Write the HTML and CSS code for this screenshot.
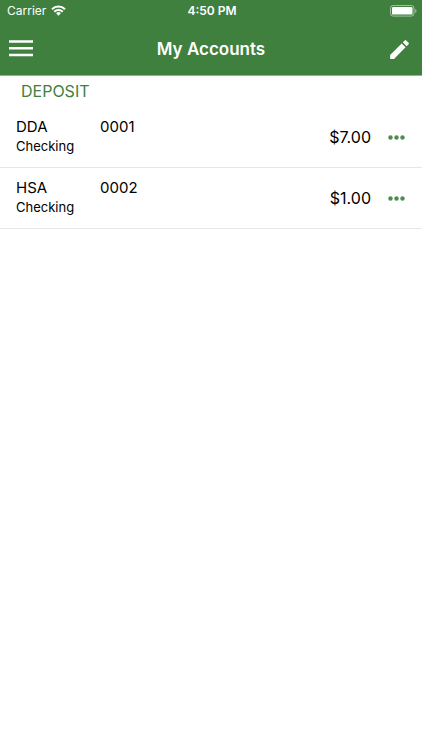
FILE: index.html
```html
<!DOCTYPE html>
<html lang="en">
<head>
<meta charset="utf-8">
<meta name="viewport" content="width=device-width, initial-scale=1">
<title>My Accounts</title>
<link rel="stylesheet" href="styles.css">
</head>
<body>
<header class="top">
  <div class="status">
    <div class="carrier">Carrier
      <svg width="15" height="11" viewBox="0 0 15 11" aria-hidden="true"><g fill="none" stroke="#fff" stroke-width="2.100"><path d="M1 4.200a9.200 9.200 0 0 1 13 0"/><path d="M3.300 6.700a5.900 5.900 0 0 1 8.400 0"/></g><path fill="#fff" d="M5.100 8.300a3.400 3.400 0 0 1 4.800 0L7.500 10.700z"/></svg>
    </div>
    <div class="time">4:50 PM</div>
    <div class="battery">
      <svg width="27" height="12" viewBox="0 0 27 12" aria-hidden="true"><rect x=".5" y=".5" width="23.500" height="10.600" rx="2.600" fill="none" stroke="#fff" stroke-opacity=".5"/><rect x="2" y="2" width="20.500" height="7.600" rx="1.200" fill="#fff"/><path d="M25.200 4v4q1.300-.6 1.300-2t-1.300-2z" fill="#fff" fill-opacity=".5"/></svg>
    </div>
  </div>
  <nav class="bar">
    <button class="icon-button" aria-label="Menu"><svg width="24" height="18" viewBox="0 0 24 18"><path d="M0 1.500h24M0 8.200h24M0 14.900h24" stroke="#fff" stroke-width="2.500"/></svg></button>
    <h1>My Accounts</h1>
    <button class="icon-button edit" aria-label="Edit"><svg width="25" height="25" viewBox="0 0 24 24"><path fill="#fff" d="M3 17.250V21h3.750L17.810 9.940l-3.750-3.750L3 17.250zM20.710 7.040a1 1 0 0 0 0-1.410l-2.340-2.340a1 1 0 0 0-1.410 0l-1.830 1.830 3.750 3.750 1.830-1.830z"/></svg></button>
  </nav>
</header>
<main>
  <h2>DEPOSIT</h2>
  <ul class="accounts">
    <li>
      <div class="info"><div class="name"><span class="code">DDA</span><span>0001</span></div><div class="kind">Checking</div></div>
      <div class="amount">$7.00</div>
      <button class="more" aria-label="More options for DDA"><svg width="17" height="5" viewBox="0 0 17 5"><g fill="#4f8a4f"><circle cx="2.500" cy="2.500" r="2.200"/><circle cx="8.500" cy="2.500" r="2.200"/><circle cx="14.500" cy="2.500" r="2.200"/></g></svg></button>
    </li>
    <li>
      <div class="info"><div class="name"><span class="code">HSA</span><span>0002</span></div><div class="kind">Checking</div></div>
      <div class="amount">$1.00</div>
      <button class="more" aria-label="More options for HSA"><svg width="17" height="5" viewBox="0 0 17 5"><g fill="#4f8a4f"><circle cx="2.500" cy="2.500" r="2.200"/><circle cx="8.500" cy="2.500" r="2.200"/><circle cx="14.500" cy="2.500" r="2.200"/></g></svg></button>
    </li>
  </ul>
</main>
</body>
</html>
```
FILE: styles.css
```css
* { box-sizing: border-box; margin: 0; padding: 0; }
body { background: #fff; color: #000; font-family: Inter, "Liberation Sans", sans-serif; }
svg { display: block; }
button { background: none; border: 0; cursor: pointer; }
.top { background: #3f803f; color: #fff; border-bottom: 1px solid #93b393; }
.status { display: grid; grid-template-columns: 1fr auto 1fr; align-items: center; height: 21px; padding: 0 5px 0 7px; font-size: 12px; }
.carrier { display: flex; align-items: center; gap: 5px; }
.time { font-weight: 600; }
.battery { justify-self: end; }
.bar { display: grid; grid-template-columns: 48px 1fr 48px; align-items: center; height: 54px; padding-top: 2px; }
.icon-button { padding-left: 9px; height: 48px; }
.edit { padding: 0 10px 0 0; justify-self: end; }
h1 { font-size: 17px; font-weight: 600; text-align: center; }
h2 { padding: 5px 21px 6px; color: #3f803f; font-size: 16px; font-weight: 400; line-height: 20px; }
.accounts { list-style: none; }
li { display: flex; align-items: center; height: 61px; padding: 0 17px 0 16px; border-bottom: 1px solid #e6e6e6; }
.info { flex: 1; padding-bottom: 2px; }
.name { display: flex; font-size: 15px; line-height: 20px; }
.code { width: 84px; }
.kind { font-size: 13px; line-height: 19px; }
.amount { font-size: 16px; }
.more { padding: 16px 0 16px 17px; }
```
